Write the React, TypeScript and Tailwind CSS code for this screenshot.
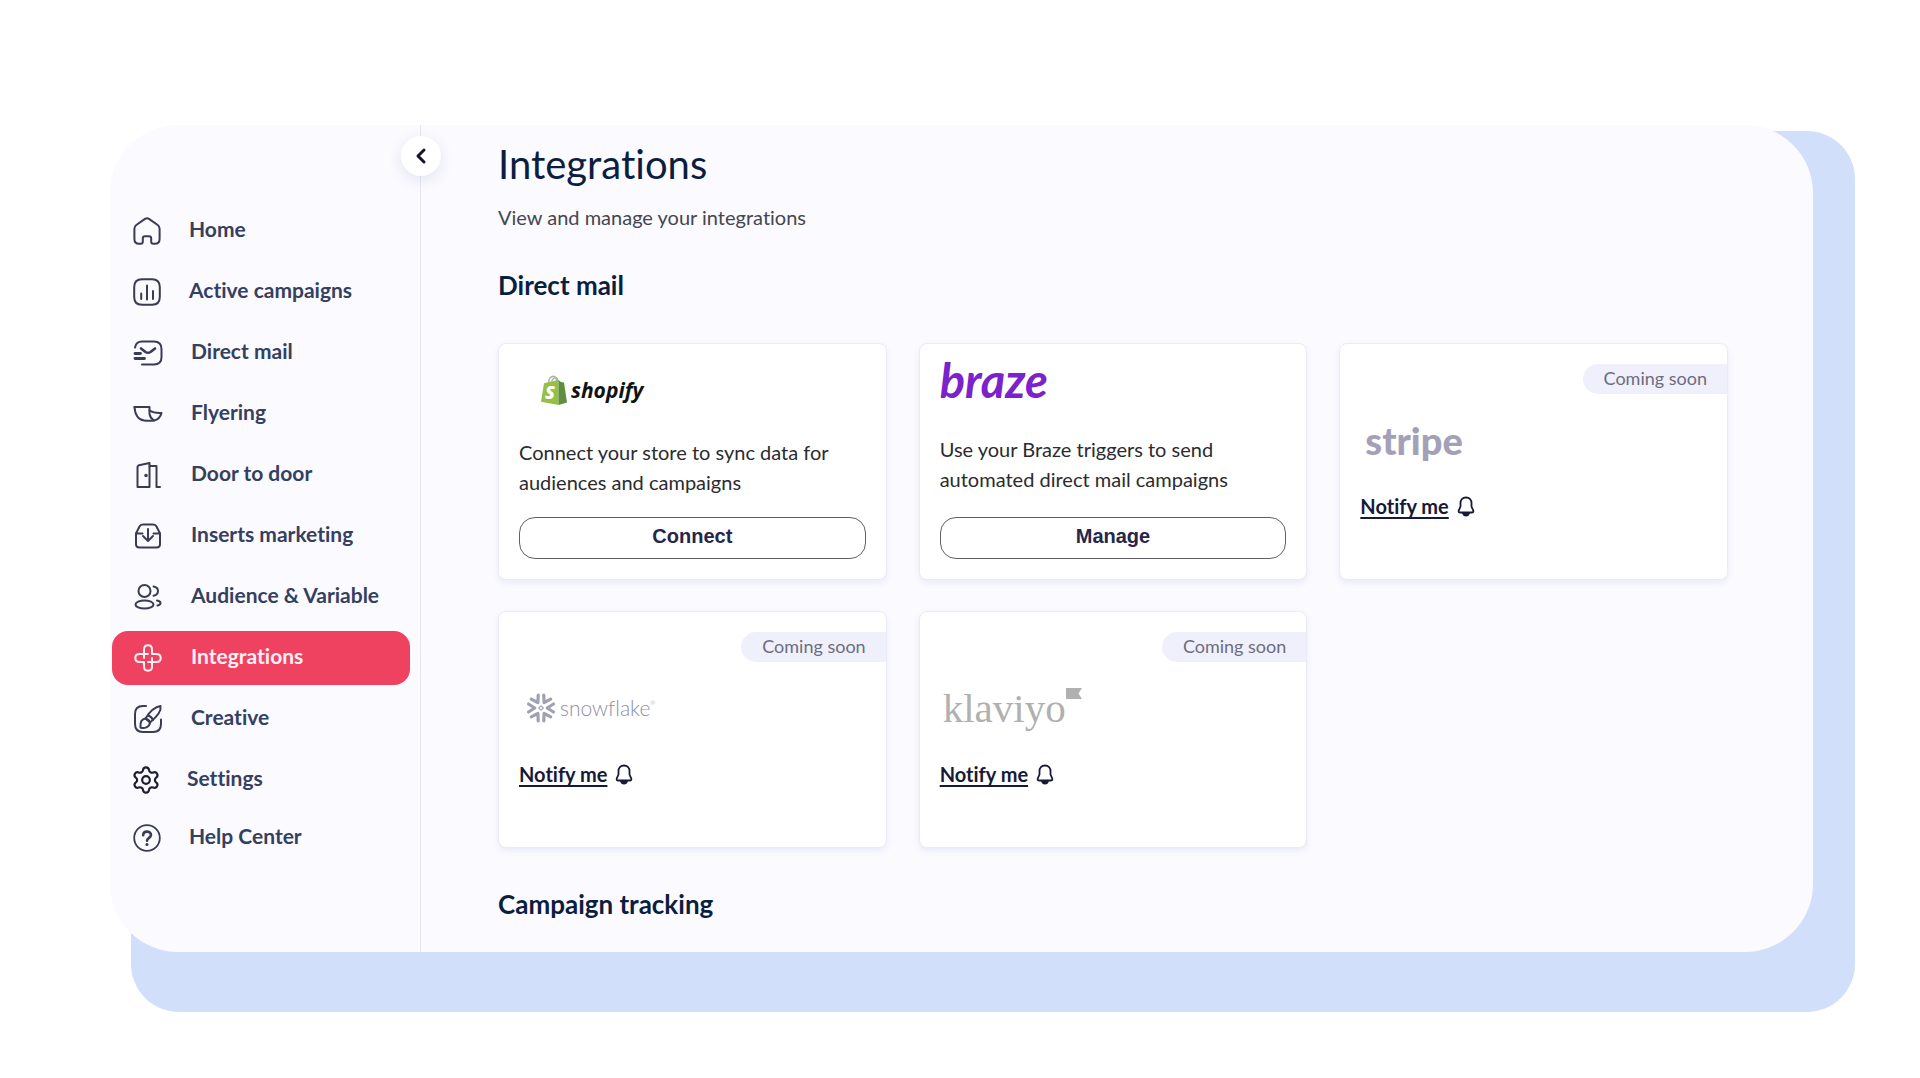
import React from 'react';
import { ChevronLeft, Settings as Gear } from 'lucide-react';

type IconProps = { w: number; h: number; sw?: number; children: React.ReactNode };

function Icon({ w, h, sw = 2, children }: IconProps) {
  return (
    <svg
      width={w}
      height={h}
      viewBox={`0 0 ${w} ${h}`}
      fill="none"
      stroke="currentColor"
      strokeWidth={sw}
      strokeLinecap="round"
      strokeLinejoin="round"
      aria-hidden="true"
    >
      {children}
    </svg>
  );
}

const HomeIcon = () => (
  <Icon w={28} h={28}>
    <path d="M1.4 11.8Q1.4 9.4 3.3 8L12 1.9Q14 .6 16 1.9L24.7 8Q26.6 9.4 26.6 11.8V22Q26.6 26.8 22 26.8H20.3Q18.2 26.8 18.2 24.6V21.5Q18.2 19.2 16 19.2H12Q9.8 19.2 9.8 21.5V24.6Q9.8 26.8 7.7 26.8H6Q1.4 26.8 1.4 22Z" />
  </Icon>
);

const ChartIcon = () => (
  <Icon w={28} h={28}>
    <path d="M9 1.2H19Q26.8 1.2 26.8 9V19Q26.8 26.8 19 26.8H9Q1.2 26.8 1.2 19V9Q1.2 1.200 9 1.200Z" />
    <path d="M8.200 15.500V21M14 7.500V21.500M20 13V21" />
  </Icon>
);

const MailIcon = () => (
  <Icon w={30} h={26}>
    <path d="M2 7.500Q3 1.500 9 1.500H21Q28.500 1.500 28.500 9V17Q28.500 24.500 21 24.500H9" />
    <path d="M8 8.500L12.500 12Q15 13.600 17.500 12L22 8.500" strokeWidth={2.600} />
    <path d="M2 13.500H7.500M2 18.500H11.500" strokeWidth={2.800} />
  </Icon>
);

const FlyerIcon = () => (
  <Icon w={30} h={18}>
    <path d="M1.500 2H16.500V9Q17.500 13.500 21 15.500" />
    <path d="M1.500 2C2 9.500 4.500 14.500 11 15.500Q16 16.200 21 15.500C26 14.500 27.500 12 28.500 8Q21 8.500 16.500 5.500" />
  </Icon>
);

const DoorIcon = () => (
  <Icon w={26} h={28}>
    <path d="M2.500 6Q2.500 4.500 4 4.200L14.500 2V26H2.500Z" />
    <path d="M14.500 5H21.500V26H25" />
    <circle cx="11" cy="14.500" r=".8" fill="currentColor" />
  </Icon>
);

const InboxIcon = () => (
  <Icon w={28} h={26}>
    <path d="M2 10.500L5.500 3.500Q6.500 1.500 9 1.500H19Q21.500 1.500 22.500 3.500L26 10.500V21Q26 24.500 22.500 24.500H5.500Q2 24.500 2 21Z" />
    <path d="M2 10.500H8.500M19.500 10.500H26M14 6V17.500M9 13L14 18L19 13" />
  </Icon>
);

const AudienceIcon = () => (
  <Icon w={28} h={28}>
    <circle cx="10.500" cy="8" r="6" />
    <ellipse cx="10.500" cy="21.500" rx="9" ry="4" />
    <path d="M19.500 3.500Q24 4.200 24 8Q24 11.800 19.500 12.800M23 17.500Q26.500 18.200 26.500 20Q26.500 22 23.500 22.500" />
  </Icon>
);

const KnotIcon = () => (
  <Icon w={28} h={28}>
    <path d="M10 14V5.500Q10 1.300 14 1.300T18 5.500V10H22.500Q26.700 10 26.700 14T22.500 18H14" />
    <path d="M18 14V22.500Q18 26.700 14 26.700T10 22.500V18H5.500Q1.300 18 1.300 14T5.500 10H14" />
  </Icon>
);

const BrushIcon = () => (
  <Icon w={30} h={30}>
    <path d="M13 2H10Q2 2 2 10V20Q2 28 10 28H20Q28 28 28 20V15.500" />
    <path d="M12.500 14.500C16.500 8 22 2.800 27.500 2C28.500 7 22.500 14 17 18.500Z" />
    <path d="M12.500 14.500Q16 15.500 17 18.500C16.500 23.500 11 25 7.500 23.500C7 18.500 8.500 15 12.500 14.500Z" />
    <path d="M15 11.500Q18.500 12.500 20 16" />
  </Icon>
);

const SettingsIcon = () => (
  <Gear width={26} height={28} viewBox="2 1 20 22" strokeWidth={1.7} color="#1d1d2f" aria-hidden="true" />
);

const HelpIcon = () => (
  <Icon w={28} h={28}>
    <circle cx="14" cy="14" r="12.800" strokeWidth={1.800} />
    <path d="M10.200 11.200C10.200 6.300 18 6.500 18 11C18 14 14 13.800 14 16.800" strokeWidth={2.600} />
    <circle cx="14" cy="20.500" r=".8" fill="currentColor" strokeWidth={1.600} />
  </Icon>
);

const BellIcon = () => (
  <Icon w={18} h={22} sw={1.8}>
    <path d="M9 2.500C5.500 2.500 3.500 5 3.500 8V11.500L1.700 15.700Q1.400 17.500 3.200 17.500H14.800Q16.600 17.500 16.300 15.700L14.500 11.500V8C14.500 5 12.500 2.500 9 2.500Z" />
    <path d="M5 18H13Q12 21.500 9 21.500T5 18Z" fill="currentColor" stroke="none" />
  </Icon>
);

type NavItem = { label: string; icon: React.ReactNode; box?: string; active?: boolean };

const primaryNav: NavItem[] = [
  { label: 'Home', icon: <HomeIcon />, box: 'w-7' },
  { label: 'Active campaigns', icon: <ChartIcon />, box: 'w-7' },
  { label: 'Direct mail', icon: <MailIcon /> },
  { label: 'Flyering', icon: <FlyerIcon /> },
  { label: 'Door to door', icon: <DoorIcon /> },
  { label: 'Inserts marketing', icon: <InboxIcon /> },
  { label: 'Audience & Variable', icon: <AudienceIcon /> },
  { label: 'Integrations', icon: <KnotIcon />, active: true },
  { label: 'Creative', icon: <BrushIcon /> },
  { label: 'Settings', icon: <SettingsIcon />, box: 'w-[26px]' },
];

const supportNav: NavItem[] = [{ label: 'Help Center', icon: <HelpIcon />, box: 'w-7' }];

function NavLink({ item }: { item: NavItem }) {
  return (
    <li>
      <a
        href="#"
        aria-current={item.active ? 'page' : undefined}
        className={
          item.active
            ? 'flex h-[54px] items-center gap-7 rounded-2xl bg-[#ee4260] pl-[21px] text-[#fff0f4]'
            : 'flex h-[54px] items-center gap-7 rounded-2xl pl-[21px] text-[#3a3b55]'
        }
      >
        <span className={`flex shrink-0 justify-center ${item.box ?? 'w-[30px]'}`}>{item.icon}</span>
        <span
          className={
            item.active
              ? 'pb-1 text-[21px] leading-6 font-bold'
              : 'pb-1 text-[21px] leading-6 font-bold text-[#35405f]'
          }
        >
          {item.label}
        </span>
      </a>
    </li>
  );
}

function Sidebar() {
  return (
    <aside className="relative w-[311px] shrink-0 border-r border-[#e6e7f2] pt-[79px] pr-[10px] pl-[2px]">
      <button
        type="button"
        aria-label="Collapse menu"
        className="absolute top-[11px] -right-[21px] flex size-10 items-center justify-center rounded-full bg-white text-[#15152e] shadow-[0_4px_14px_rgba(90,100,150,0.14)]"
      >
        <ChevronLeft size={24} strokeWidth={3} />
      </button>
      <nav aria-label="Main">
        <ul className="flex flex-col gap-[7px]">
          {primaryNav.map((item) => (
            <NavLink key={item.label} item={item} />
          ))}
        </ul>
        <ul className="mt-1">
          {supportNav.map((item) => (
            <NavLink key={item.label} item={item} />
          ))}
        </ul>
      </nav>
    </aside>
  );
}

function ShopifyLogo() {
  return (
    <div className="flex h-[73px] items-start gap-1 pt-[11px] pl-[22px]">
      <svg width="26" height="30" viewBox="0 0 26 30" aria-hidden="true">
        <path d="M7.500 8C8 4 10 1.200 12.500 1.200S15.500 4 15.500 7M10.500 7.500C11 3.500 14 1.500 16 3.200Q17 4.500 17 6.500" fill="none" stroke="#a9b3a4" strokeWidth="1.400" />
        <path d="M3 8.200L17.500 5L17.500 30L0 26.800Z" fill="#95bf47" />
        <path d="M17.500 5L20 7L23 7.500L26 27.600L17.500 30Z" fill="#5e8e3e" />
        <text x="4" y="24" fontFamily="Open Sans, sans-serif" fontStyle="italic" fontWeight="800" fontSize="18" fill="#fff">S</text>
      </svg>
      <span className="font-['Open_Sans',sans-serif] text-[21px] leading-[30px] font-bold text-[#111] italic">
        shopify
      </span>
    </div>
  );
}

function BrazeLogo() {
  return (
    <div className="h-[70px]">
      <span className="block text-[47px] leading-8 font-bold text-[#7a22cc] italic">braze</span>
    </div>
  );
}

function StripeLogo() {
  return <span className="pl-[5px] text-[38px] leading-10 font-black text-[#a3a1b8]">stripe</span>;
}

const arms = [0, 60, 120, 180, 240, 300];

function SnowflakeLogo() {
  return (
    <div className="flex items-center gap-1 pl-[7px] text-[#a0a0b4]">
      <svg width="30" height="30" viewBox="-15 -15 30 30" fill="none" stroke="currentColor" aria-hidden="true">
        {arms.map((angle) => (
          <path
            key={angle}
            transform={`rotate(${angle})`}
            d="M-12.500 -4L-6.200 0L-12.500 4"
            strokeWidth="3.200"
            strokeLinecap="round"
            strokeLinejoin="round"
          />
        ))}
        <rect x="-1.600" y="-1.600" width="3.200" height="3.200" transform="rotate(45)" strokeWidth="1.200" />
      </svg>
      <span className="flex items-start text-[21px] leading-6 font-light text-[#8e8ea3]">
        snowflake
        <span className="text-[6px] leading-[14px]">®</span>
      </span>
    </div>
  );
}

function KlaviyoLogo() {
  return (
    <div className="flex items-start pl-[3px] text-[#b0b0b0]">
      <span className="font-['Liberation_Serif',serif] text-[41px] leading-10">klaviyo</span>
      <svg width="16" height="11" viewBox="0 0 16 11" fill="currentColor" aria-hidden="true">
        <path d="M0 0H16L12.500 5.500L16 11H0Z" />
      </svg>
    </div>
  );
}

const cardClass =
  'flex min-h-[237px] flex-col rounded-lg border border-[#ebebf7] bg-white p-5 shadow-[0_3px_6px_rgba(110,110,210,0.10)]';

function ConnectCard({ logo, text, action }: { logo: React.ReactNode; text: string; action: string }) {
  return (
    <article className={cardClass}>
      {logo}
      <p className="text-[20px] leading-[30px] text-[#2b2b30]">{text}</p>
      <button
        type="button"
        className="mt-auto h-[42px] w-full rounded-2xl border border-[#5f6065] pb-1 font-['Liberation_Sans',Arial,sans-serif] text-[20px] leading-6 font-bold text-[#25264c]"
      >
        {action}
      </button>
    </article>
  );
}

function SoonCard({ logo }: { logo: React.ReactNode }) {
  return (
    <article className={cardClass}>
      <span className="-mr-5 flex h-[30px] items-center self-end rounded-l-full bg-[#f0f0fd] pr-5 pb-[2px] pl-[21px] text-[18px] leading-6 text-[#6d6c7d]">
        Coming soon
      </span>
      <div className="flex h-[100px] items-center pb-2">{logo}</div>
      <a href="#" className="flex items-center gap-2 self-start text-[20px] leading-6 font-bold text-[#161a37]">
        <span className="underline decoration-2 underline-offset-3">Notify me</span>
        <BellIcon />
      </a>
    </article>
  );
}

export default function App() {
  return (
    <div className="flex min-h-screen items-start bg-white pt-[131px] pr-[65px] pb-[66px] pl-[131px] font-['Lato',sans-serif] [font-variant-ligatures:none]">
      <div className="flow-root grow rounded-[48px] rounded-tl-[120px] bg-[#d2dffb] pr-[42px] pb-[60px]">
        <div className="-mt-[6px] -ml-[21px] flex rounded-[68px] bg-[#fafaff]">
          <Sidebar />
          <main className="grow pt-[15px] pr-[85px] pb-8 pl-[77px] text-[#0b1e3f]">
            <h1 className="text-[40px] leading-[48px]">Integrations</h1>
            <p className="mt-[17px] text-[20px] leading-6 text-[#45464f]">View and manage your integrations</p>
            <h2 className="mt-10 text-[26px] leading-8 font-bold">Direct mail</h2>
            <div className="mt-[42px] grid grid-cols-3 gap-x-8 gap-y-[31px]">
              <ConnectCard
                logo={<ShopifyLogo />}
                text="Connect your store to sync data for audiences and campaigns"
                action="Connect"
              />
              <ConnectCard
                logo={<BrazeLogo />}
                text="Use your Braze triggers to send automated direct mail campaigns"
                action="Manage"
              />
              <SoonCard logo={<StripeLogo />} />
              <SoonCard logo={<SnowflakeLogo />} />
              <SoonCard logo={<KlaviyoLogo />} />
            </div>
            <h2 className="mt-10 text-[26px] leading-8 font-bold">Campaign tracking</h2>
          </main>
        </div>
      </div>
    </div>
  );
}
